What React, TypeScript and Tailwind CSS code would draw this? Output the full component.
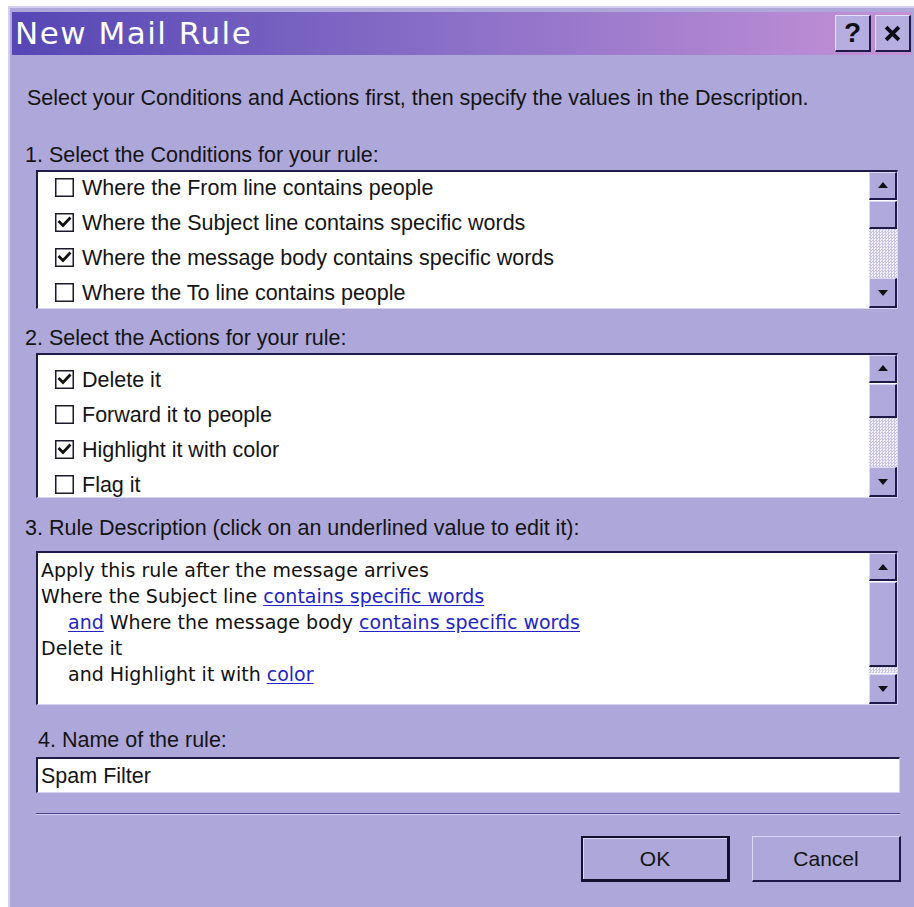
import React from "react";

const ui = "font-['Liberation_Sans',Arial,sans-serif]";

type Item = { label: string; checked: boolean };

const conditions: Item[] = [
  { label: "Where the From line contains people", checked: false },
  { label: "Where the Subject line contains specific words", checked: true },
  { label: "Where the message body contains specific words", checked: true },
  { label: "Where the To line contains people", checked: false },
];

const actions: Item[] = [
  { label: "Delete it", checked: true },
  { label: "Forward it to people", checked: false },
  { label: "Highlight it with color", checked: true },
  { label: "Flag it", checked: false },
];

function CheckBox({ checked }: { checked: boolean }) {
  return (
    <svg width="19" height="19" viewBox="0 0 19 19" className="shrink-0">
      <rect x="0.75" y="0.75" width="17.5" height="17.5" fill="#fff" stroke="#1a1a2a" strokeWidth="1.5" />
      {checked && <path d="M4.5 9 L8 12.5 L14.5 5.5" fill="none" stroke="#111" strokeWidth="2.8" strokeLinecap="square" />}
    </svg>
  );
}

function Arrow({ up }: { up?: boolean }) {
  return (
    <svg width="10" height="6" viewBox="0 0 10 6">
      <path d={up ? "M0 6 L5 0 L10 6 Z" : "M0 0 L10 0 L5 6 Z"} fill="#111" />
    </svg>
  );
}

// raised 3D block used for scroll buttons and thumbs
function Raised({ className, children }: { className?: string; children?: React.ReactNode }) {
  return (
    <div
      className={`flex items-center justify-center bg-[#b0a9dc] border-t border-l border-t-[#dcd7f6] border-l-[#dcd7f6] border-b-2 border-r-2 border-b-[#1d1a4a] border-r-[#1d1a4a] ${className ?? ""}`}
    >
      {children}
    </div>
  );
}

function ScrollBar({ thumb, track }: { thumb: string; track: string }) {
  return (
    <div className="w-[28px] shrink-0 flex flex-col">
      <Raised className="h-[28px]">
        <Arrow up />
      </Raised>
      <Raised className={thumb} />
      <div className={`${track} bg-[repeating-conic-gradient(#c9c3ec_0_25%,#f4f2fc_0_50%)] bg-[length:3px_3px]`} />
      <Raised className="h-[30px] mt-auto">
        <Arrow />
      </Raised>
    </div>
  );
}

function ListBox({ children, className, scroll }: { children: React.ReactNode; className: string; scroll: React.ReactNode }) {
  return (
    <div
      className={`ml-[24px] mr-[14px] flex bg-white border-t-2 border-l-2 border-t-[#1f1c4c] border-l-[#1f1c4c] border-b border-r border-b-[#d8d3f4] border-r-[#d8d3f4] overflow-hidden ${className}`}
    >
      <div className="flex-1 overflow-hidden">{children}</div>
      {scroll}
    </div>
  );
}

function CheckRows({ items }: { items: Item[] }) {
  return (
    <>
      {items.map((it) => (
        <div key={it.label} className="h-[35px] flex items-center pl-[17px] gap-[8px] text-[21.5px] text-[#141414]">
          <CheckBox checked={it.checked} />
          <span>{it.label}</span>
        </div>
      ))}
    </>
  );
}

function Link({ children }: { children: React.ReactNode }) {
  return <span className="text-[#2424c4] underline underline-offset-2">{children}</span>;
}

function TitleButton({ children }: { children: React.ReactNode }) {
  return (
    <div className="w-[36px] h-[37px] flex items-center justify-center bg-[#b6aee0] border-t border-l border-t-[#e4e0f8] border-l-[#e4e0f8] border-b-2 border-r-2 border-b-[#1d1a4a] border-r-[#1d1a4a] text-[28px] font-bold text-[#0e0e18] leading-none">
      {children}
    </div>
  );
}

function DialogButton({ label, isDefault }: { label: string; isDefault?: boolean }) {
  return (
    <div
      className={`w-[149px] h-[46px] flex items-center justify-center bg-[#aea7da] text-[21px] text-[#141414] ${
        isDefault
          ? "border-2 border-[#12102e] border-b-[3px] border-r-[3px] shadow-[inset_1px_1px_0_#dcd7f6]"
          : "border-t border-l border-t-[#dcd7f6] border-l-[#dcd7f6] border-b-2 border-r-2 border-b-[#1d1a4a] border-r-[#1d1a4a]"
      }`}
    >
      {label}
    </div>
  );
}

export default function App() {
  return (
    <div className={`w-[914px] h-[907px] bg-white overflow-hidden ${ui}`}>
      <div className="ml-[8px] mt-[6px] h-[901px] bg-[#aea7da] border-t-2 border-l-2 border-[#d4cff2] pt-[4px] pl-[2px] pr-[2px] flex flex-col">
        {/* title bar */}
        <div className="h-[43px] shrink-0 flex items-center bg-linear-to-r from-[#5646b4] via-[#8c70c8] to-[#c592d6] pl-[3px] pr-[1px]">
          <span className="font-['DejaVu_Sans',sans-serif] text-[31px] text-white leading-none tracking-[1.5px]">New Mail Rule</span>
          <div className="ml-auto flex gap-[4px]">
            <TitleButton>?</TitleButton>
            <TitleButton>
              <svg width="17" height="17" viewBox="0 0 16 16">
                <path d="M2 2 L14 14 M14 2 L2 14" stroke="#0e0e18" strokeWidth="3.6" />
              </svg>
            </TitleButton>
          </div>
        </div>

        <div className="flex flex-col text-[21.5px] text-[#141414] leading-[24px]">
          <p className="mt-[31px] pl-[15px]">
            Select your Conditions and Actions first, then specify the values in the Description.
          </p>

          <p className="mt-[33px] pl-[13px]">1. Select the Conditions for your rule:</p>
          <ListBox
            className="mt-[3px] h-[139px]"
            scroll={<ScrollBar thumb="h-[28px] mt-[1px]" track="h-[50px]" />}
          >
            <div className="-mt-[2px]">
              <CheckRows items={conditions} />
            </div>
          </ListBox>

          <p className="mt-[17px] pl-[13px]">2. Select the Actions for your rule:</p>
          <ListBox
            className="mt-[3px] h-[145px]"
            scroll={<ScrollBar thumb="h-[34px] mt-[1px]" track="h-[50px]" />}
          >
            <div className="pt-[7px]">
              <CheckRows items={actions} />
            </div>
          </ListBox>

          <p className="mt-[18px] pl-[13px]">3. Rule Description (click on an underlined value to edit it):</p>
          <ListBox
            className="mt-[11px] h-[154px]"
            scroll={<ScrollBar thumb="h-[85px] mt-[1px]" track="h-[6px]" />}
          >
            <div className="pt-[4px] pl-[3px] font-['DejaVu_Sans',sans-serif] text-[19px] leading-[26px] text-[#111]">
              <div>Apply this rule after the message arrives</div>
              <div>
                Where the Subject line <Link>contains specific words</Link>
              </div>
              <div className="pl-[27px]">
                <Link>and</Link> Where the message body <Link>contains specific words</Link>
              </div>
              <div>Delete it</div>
              <div className="pl-[27px]">
                and Highlight it with <Link>color</Link>
              </div>
            </div>
          </ListBox>

          <p className="mt-[23px] pl-[26px]">4. Name of the rule:</p>
          <div className="mt-[5px] ml-[24px] mr-[12px] h-[36px] flex items-center bg-white border-t-2 border-l-2 border-t-[#1f1c4c] border-l-[#1f1c4c] border-b border-r border-b-[#d8d3f4] border-r-[#d8d3f4] pl-[3px]">
            Spam Filter
          </div>

          <div className="mt-[20px] ml-[24px] mr-[12px] h-[2px] border-t border-t-[#4a4488] border-b border-b-[#d4cff2]" />

          <div className="mt-[21px] mr-[11px] flex justify-end gap-[22px]">
            <DialogButton label="OK" isDefault />
            <DialogButton label="Cancel" />
          </div>
        </div>
      </div>
    </div>
  );
}
